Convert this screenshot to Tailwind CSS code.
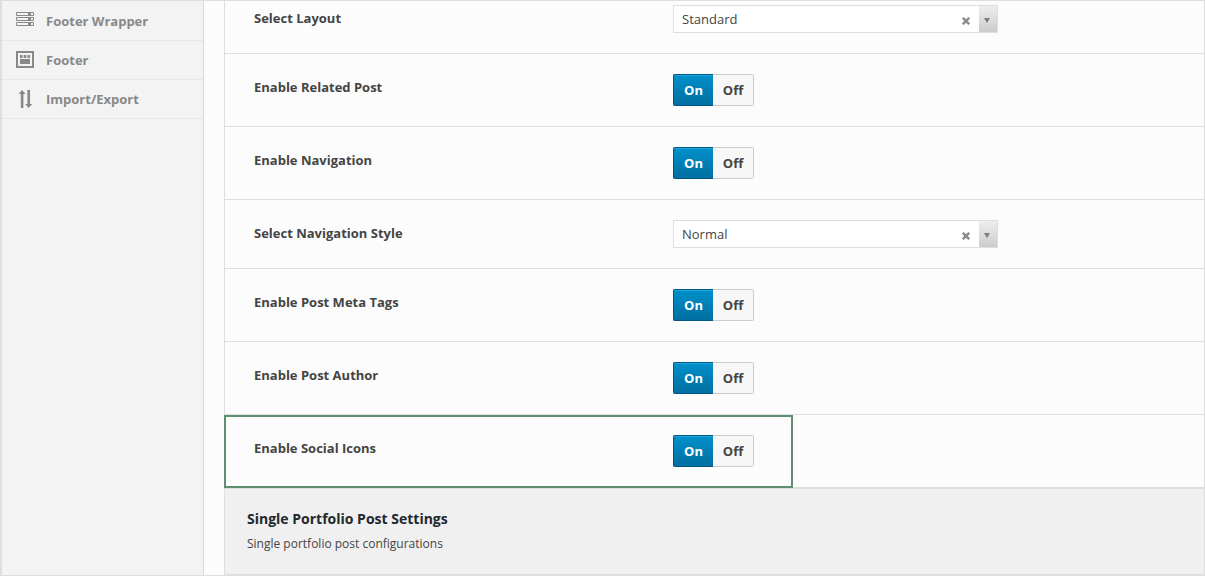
<!DOCTYPE html>
<html lang="en">
<head>
<meta charset="utf-8">
<meta name="viewport" content="width=device-width, initial-scale=1">
<title>Portfolio Settings</title>
<script src="https://cdn.jsdelivr.net/npm/@tailwindcss/browser@4"></script>
</head>
<body class="flex min-h-screen border border-[#dedede] bg-[#fcfcfc] font-['Open_Sans',sans-serif] text-[13px] leading-5 text-[#444]">

<nav class="w-[203px] shrink-0 border-r border-l border-r-[#d8d8d8] border-l-[#dedede] bg-[#f3f3f3] font-bold text-[#888]">
  <ul>
    <li class="border-b border-[#e7e7e7]">
      <a href="#" class="flex h-[39px] items-center gap-3 pl-3.5">
        <svg class="mb-1 size-[18px] shrink-0" viewBox="0 0 18 18" fill="none" stroke="currentColor" aria-hidden="true">
          <path d="M.5 2.5h17v3H.5zM.5 7.5h17v3H.5zM.5 12.5h17v3H.5z"/>
          <path d="M12 4h3M12 9h3M12 14h3" stroke-width="3"/>
        </svg>
        Footer Wrapper
      </a>
    </li>
    <li class="border-b border-[#e7e7e7]">
      <a href="#" class="flex h-[38px] items-center gap-3 pl-3.5">
        <svg class="size-[18px] shrink-0" viewBox="0 0 18 18" fill="currentColor" aria-hidden="true">
          <path fill-rule="evenodd" d="M0 0h18v17H0zM2 2v13h14V2z"/>
          <path d="M4 4h2.6v3H4zM7.7 4h2.6v3H7.7zM11.4 4H14v3h-2.6zM4 8h10v5H4z"/>
        </svg>
        Footer
      </a>
    </li>
    <li class="border-b border-[#e7e7e7]">
      <a href="#" class="flex h-[38px] items-center gap-3 pl-3.5">
        <svg class="size-[18px] shrink-0" viewBox="0 0 18 18" fill="currentColor" aria-hidden="true">
          <path d="M6 0 2.6 4h2.2v14h2.6V4h2.2zM12.7 18 9.2 14h2.2V0H14v14h2.2z"/>
        </svg>
        Import/Export
      </a>
    </li>
  </ul>
</nav>

<main class="flex min-w-0 flex-1 flex-col pl-5">
  <form class="flex flex-1 flex-col border-l border-[#dedede]">

    <div class="flex border-b border-[#dedede] pt-1 pb-5 pl-[29px]">
      <label for="layout" class="w-[419px] pt-[3px] font-bold">Select Layout</label>
      <div class="relative w-[325px]">
        <select id="layout" class="block h-7 w-full appearance-none border border-[#dedede] bg-white pl-2 text-[#444]"><option>Standard</option><option>Modern</option></select>
        <button type="button" aria-label="Clear layout" class="absolute top-3 right-7 text-[#8a8a8a]">
          <svg class="size-2" viewBox="0 0 8 8" stroke="currentColor" stroke-width="2.4"><path d="M.8.8l6.4 6.4M7.2.8.8 7.2"/></svg>
        </button>
        <span class="pointer-events-none absolute inset-y-px right-px flex w-[18px] items-center justify-center bg-linear-to-b from-[#eee] to-[#ccc] pt-0.5 pr-0.5 text-[#7d7d7d]">
          <svg class="h-[5px] w-1.5" viewBox="0 0 6 5" fill="currentColor"><path d="M0 0h6L3 5z"/></svg>
        </span>
      </div>
    </div>

    <div class="flex border-b border-[#dedede] py-5 pl-[29px]">
      <span id="related" class="w-[419px] pt-[3px] font-bold">Enable Related Post</span>
      <div role="group" aria-labelledby="related" class="flex h-8 font-bold">
        <button type="button" aria-pressed="true" class="w-10 rounded-l-xs border border-r-0 border-[#005684] bg-linear-to-b from-[#0090cb] to-[#006fa0] text-white inset-shadow-[0_1px_0_#1da5dc]">On</button>
        <button type="button" aria-pressed="false" class="w-[41px] rounded-r-xs border border-l-0 border-[#ccc] bg-[#f7f7f7]">Off</button>
      </div>
    </div>

    <div class="flex border-b border-[#dedede] py-5 pl-[29px]">
      <span id="navigation" class="w-[419px] pt-[3px] font-bold">Enable Navigation</span>
      <div role="group" aria-labelledby="navigation" class="flex h-8 font-bold">
        <button type="button" aria-pressed="true" class="w-10 rounded-l-xs border border-r-0 border-[#005684] bg-linear-to-b from-[#0090cb] to-[#006fa0] text-white inset-shadow-[0_1px_0_#1da5dc]">On</button>
        <button type="button" aria-pressed="false" class="w-[41px] rounded-r-xs border border-l-0 border-[#ccc] bg-[#f7f7f7]">Off</button>
      </div>
    </div>

    <div class="flex border-b border-[#dedede] py-5 pl-[29px]">
      <label for="navstyle" class="w-[419px] pt-[3px] font-bold">Select Navigation Style</label>
      <div class="relative w-[325px]">
        <select id="navstyle" class="block h-7 w-full appearance-none border border-[#dedede] bg-white pl-2 text-[#444]"><option>Normal</option><option>Sticky</option></select>
        <button type="button" aria-label="Clear navigation style" class="absolute top-3 right-7 text-[#8a8a8a]">
          <svg class="size-2" viewBox="0 0 8 8" stroke="currentColor" stroke-width="2.4"><path d="M.8.8l6.4 6.4M7.2.8.8 7.2"/></svg>
        </button>
        <span class="pointer-events-none absolute inset-y-px right-px flex w-[18px] items-center justify-center bg-linear-to-b from-[#eee] to-[#ccc] pt-0.5 pr-0.5 text-[#7d7d7d]">
          <svg class="h-[5px] w-1.5" viewBox="0 0 6 5" fill="currentColor"><path d="M0 0h6L3 5z"/></svg>
        </span>
      </div>
    </div>

    <div class="flex border-b border-[#dedede] py-5 pl-[29px]">
      <span id="meta" class="w-[419px] pt-[3px] font-bold">Enable Post Meta Tags</span>
      <div role="group" aria-labelledby="meta" class="flex h-8 font-bold">
        <button type="button" aria-pressed="true" class="w-10 rounded-l-xs border border-r-0 border-[#005684] bg-linear-to-b from-[#0090cb] to-[#006fa0] text-white inset-shadow-[0_1px_0_#1da5dc]">On</button>
        <button type="button" aria-pressed="false" class="w-[41px] rounded-r-xs border border-l-0 border-[#ccc] bg-[#f7f7f7]">Off</button>
      </div>
    </div>

    <div class="flex border-b border-[#dedede] py-5 pl-[29px]">
      <span id="author" class="w-[419px] pt-[3px] font-bold">Enable Post Author</span>
      <div role="group" aria-labelledby="author" class="flex h-8 font-bold">
        <button type="button" aria-pressed="true" class="w-10 rounded-l-xs border border-r-0 border-[#005684] bg-linear-to-b from-[#0090cb] to-[#006fa0] text-white inset-shadow-[0_1px_0_#1da5dc]">On</button>
        <button type="button" aria-pressed="false" class="w-[41px] rounded-r-xs border border-l-0 border-[#ccc] bg-[#f7f7f7]">Off</button>
      </div>
    </div>

    <div class="relative flex border-b-2 border-[#dedede] py-5 pl-[29px]">
      <span id="social" class="w-[419px] pt-[3px] font-bold">Enable Social Icons</span>
      <div role="group" aria-labelledby="social" class="flex h-8 font-bold">
        <button type="button" aria-pressed="true" class="w-10 rounded-l-xs border border-r-0 border-[#005684] bg-linear-to-b from-[#0090cb] to-[#006fa0] text-white inset-shadow-[0_1px_0_#1da5dc]">On</button>
        <button type="button" aria-pressed="false" class="w-[41px] rounded-r-xs border border-l-0 border-[#ccc] bg-[#f7f7f7]">Off</button>
      </div>
      <div class="pointer-events-none absolute top-0 -bottom-px -left-px w-[569px] border-2 border-[#5f8f70]"></div>
    </div>

    <section class="flex-1 border-b border-[#dedede] bg-[#f0f0f0] pt-5 pb-5 pl-[22px]">
      <h3 class="text-sm leading-5 font-bold text-[#23282d]">Single Portfolio Post Settings</h3>
      <p class="pt-[7px] text-xs leading-4">Single portfolio post configurations</p>
    </section>
  </form>
</main>
</body>
</html>
